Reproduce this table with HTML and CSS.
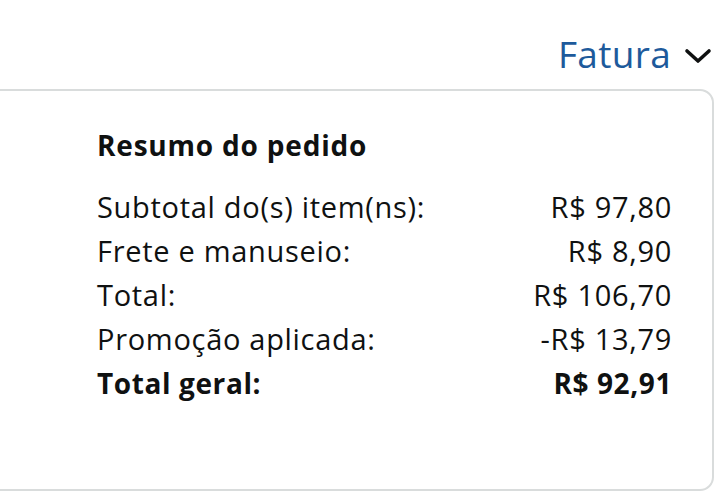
FILE: index.html
```html
<!DOCTYPE html>
<html lang="pt-BR">
<head>
    <meta charset="UTF-8">
    <title>Resumo do pedido</title>
    <link rel="stylesheet" href="styles.css">
</head>
<body>
    <div class="page">
        <div class="invoice-bar">
            <a class="invoice-link" href="#">Fatura
                <svg class="chevron" width="28" height="20" viewBox="0 0 28 20">
                    <path d="M3 5 L14 15 L25 5" fill="none" stroke="#0f1111" stroke-width="3.6" stroke-linecap="round" stroke-linejoin="round"/>
                </svg>
            </a>
        </div>

        <div class="card">
            <div class="summary">
                <h2>Resumo do pedido</h2>
                <div class="row"><span>Subtotal do(s) item(ns):</span><span>R$ 97,80</span></div>
                <div class="row"><span>Frete e manuseio:</span><span>R$ 8,90</span></div>
                <div class="row"><span>Total:</span><span>R$ 106,70</span></div>
                <div class="row"><span>Promoção aplicada:</span><span>-R$ 13,79</span></div>
                <div class="row grand"><span>Total geral:</span><span>R$ 92,91</span></div>
            </div>
        </div>
    </div>
</body>
</html>
```

FILE: styles.css
```css
:root {
    --text-color: #0f1111;
    --link-color: #1d5a9b;
    --border-color: #d9dcdc;
}

* {
    box-sizing: border-box;
    margin: 0;
    padding: 0;
}

body {
    font-family: "Open Sans", "Noto Sans", sans-serif;
    color: var(--text-color);
    background: #ffffff;
}

.page {
    padding-top: 28px;
}

.invoice-bar {
    display: flex;
    justify-content: flex-end;
    padding-right: 15px;
    height: 61px;
}

.invoice-link {
    display: flex;
    align-items: center;
    gap: 13px;
    height: 50px;
    color: var(--link-color);
    text-decoration: none;
    font-size: 37px;
    letter-spacing: 0.3px;
}

.chevron {
    margin-top: 6px;
}

.card {
    margin: 0 13px 0 -20px;
    height: 402px;
    border: 2px solid var(--border-color);
    border-radius: 14px;
    padding: 34px 40px 0 115px;
}

.summary h2 {
    font-size: 28px;
    font-weight: 700;
    line-height: 40px;
    letter-spacing: 0.8px;
    margin-bottom: 20px;
}

.row {
    display: flex;
    justify-content: space-between;
    font-size: 29px;
    line-height: 44px;
    letter-spacing: 0.7px;
}

.row.grand {
    font-weight: 700;
    font-size: 28px;
    letter-spacing: 0.6px;
}
```
